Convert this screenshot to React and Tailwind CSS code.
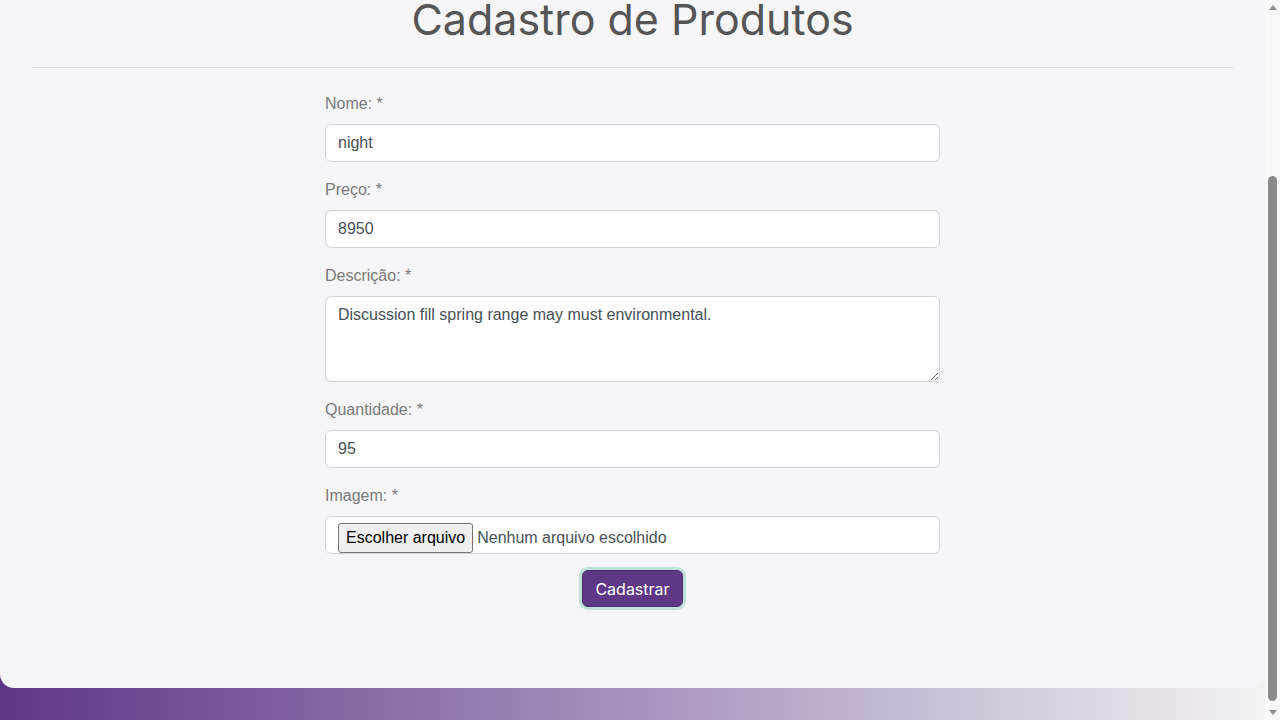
import React, { useLayoutEffect, useRef } from "react";

const labelCls = "block mb-2 text-[16px] leading-6 text-[#7a7a7a]";
const inputCls =
  "block w-full h-[38px] px-3 py-[6px] text-[16px] leading-6 text-[#495057] bg-white border border-[#ced4da] rounded-[6px] outline-none";

const fields = [
  { label: "Nome: *", value: "night" },
  { label: "Preço: *", value: "8950" },
];

const ScrollBar = () => (
  <div className="w-[15px] h-screen bg-[#f9f9f9] flex flex-col items-center shrink-0">
    <div className="h-[15px] flex items-center justify-center">
      <div className="w-0 h-0 border-l-[4px] border-r-[4px] border-b-[5px] border-l-transparent border-r-transparent border-b-[#8a8a8a]" />
    </div>
    <div className="flex-1 w-full flex flex-col items-center">
      <div className="h-[161px]" />
      <div className="w-[9px] flex-1 bg-[#8b8b8b] rounded-t-[5px] rounded-b-[5px] mb-[4px]" />
    </div>
    <div className="h-[15px] flex items-center justify-center">
      <div className="w-0 h-0 border-l-[4px] border-r-[4px] border-t-[5px] border-l-transparent border-r-transparent border-t-[#8a8a8a]" />
    </div>
  </div>
);

const App = () => {
  const scrollRef = useRef(null);

  useLayoutEffect(() => {
    if (scrollRef.current) {
      scrollRef.current.scrollTop = scrollRef.current.scrollHeight;
    }
  }, []);

  return (
    <div
      className="flex h-screen overflow-hidden"
      style={{ fontFamily: '"Liberation Sans", Arial, sans-serif' }}
    >
      <div
        ref={scrollRef}
        className="flex-1 h-screen overflow-y-scroll bg-gradient-to-r from-[#603586] to-[#f3f3f3]"
      >
        <div className="bg-[#f6f6f8] rounded-b-[14px] px-8 pt-[236px] pb-[81px]">
          <h1
            className="text-center text-[43px] leading-[52px] font-normal text-[#555555]"
            style={{ fontFamily: "Inter, 'Open Sans', sans-serif" }}
          >
            Cadastro de Produtos
          </h1>
          <hr className="mt-[22px] mb-6 border-t border-[#dcdcdf]" />

          <form className="w-[615px] mx-auto" onSubmit={(e) => e.preventDefault()}>
            {fields.map((f) => (
              <div key={f.label} className="mb-4">
                <label className={labelCls}>{f.label}</label>
                <input type="text" defaultValue={f.value} className={inputCls} />
              </div>
            ))}

            <div className="mb-4">
              <label className={labelCls}>Descrição: *</label>
              <textarea
                rows={3}
                defaultValue="Discussion fill spring range may must environmental."
                className="block w-full h-[86px] px-3 py-[6px] text-[16px] leading-6 text-[#495057] bg-white border border-[#ced4da] rounded-[6px] outline-none"
              />
            </div>

            <div className="mb-4">
              <label className={labelCls}>Quantidade: *</label>
              <input type="text" defaultValue="95" className={inputCls} />
            </div>

            <div className="mb-4">
              <label className={labelCls}>Imagem: *</label>
              <div className="flex items-start h-[38px] px-3 pt-[6px] bg-white border border-[#ced4da] rounded-[6px]">
                <button
                  type="button"
                  className="h-[30px] px-[7px] bg-[#efefef] border border-[#767676] rounded-[3px] text-[16px] text-black leading-none shrink-0"
                >
                  Escolher arquivo
                </button>
                <span className="ml-[4px] text-[16px] leading-[30px] text-[#495057]">
                  Nenhum arquivo escolhido
                </span>
              </div>
            </div>

            <div className="flex justify-center">
              <button
                type="submit"
                className="w-[101px] h-[37px] bg-[#5f3885] text-white text-[16px] rounded-[6px] border border-[#4f2d73] shadow-[0_0_0_3px_#bde3d9]"
                style={{ fontFamily: "Inter, 'Open Sans', sans-serif" }}
              >
                Cadastrar
              </button>
            </div>
          </form>
        </div>
        <div className="h-8" />
      </div>
      <ScrollBar />
    </div>
  );
};

export default App;
